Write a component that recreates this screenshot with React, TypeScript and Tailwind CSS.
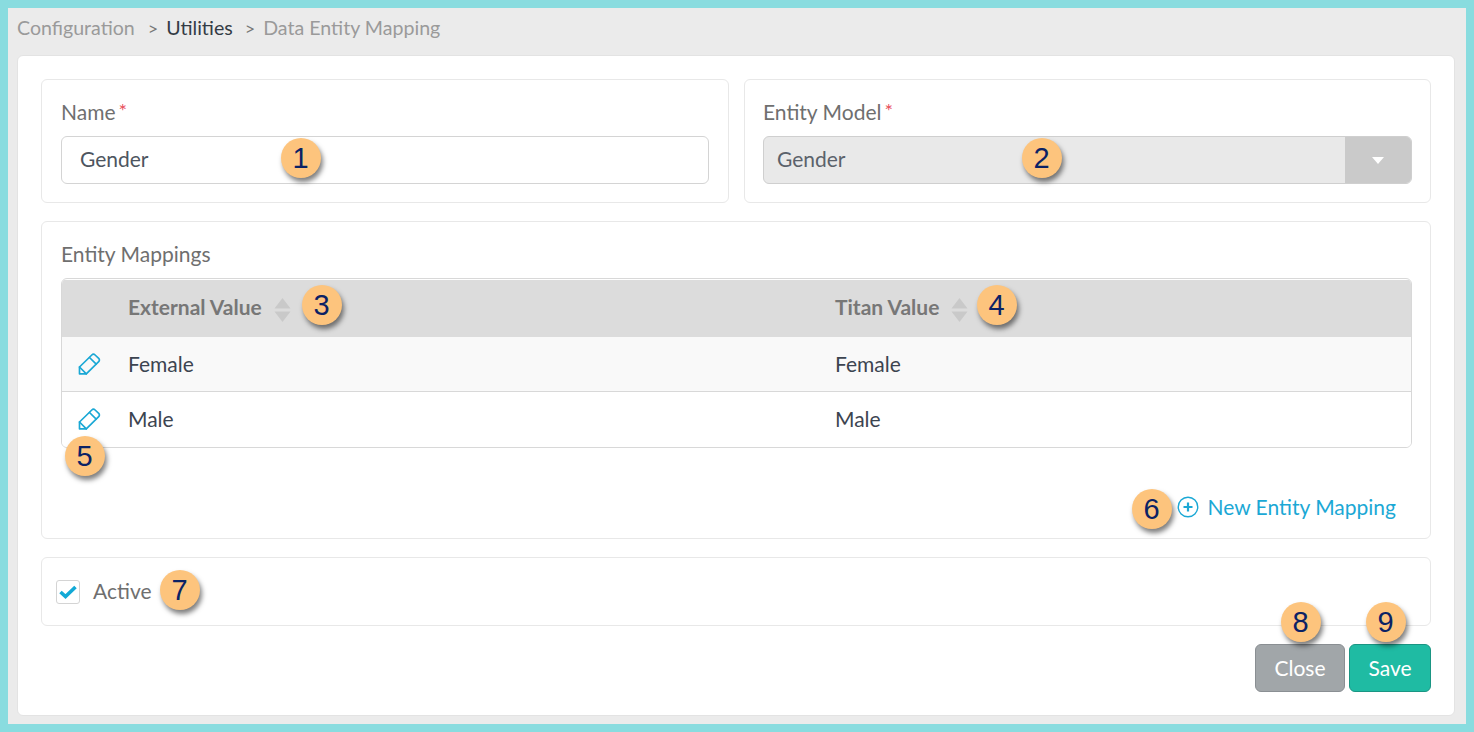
import React from "react";

function Callout({ n, className }: { n: number; className: string }) {
  return (
    <div
      className={`absolute flex h-10 w-10 items-center justify-center rounded-full bg-[#fdc47d] pr-[1px] text-[29px] leading-none text-[#0b2265] shadow-[2px_4px_5px_rgba(0,0,0,0.5)] ${className}`}
      style={{ fontFamily: '"Liberation Sans", Arial, sans-serif' }}
    >
      {n}
    </div>
  );
}

function Pencil() {
  return (
    <svg width="23" height="22" viewBox="0 0 23 22" fill="none" stroke="#1ba8d5" strokeWidth="1.7" strokeLinejoin="round" strokeLinecap="round">
      <path d="M1.5 14 13.8 2a2.4 2.4 0 0 1 3.3 0l3.6 3.4a2.3 2.3 0 0 1 0 3.3L8.3 20.8H1.5z" />
      <path d="M11.5 4.5l6.7 6.6" />
      <path d="M1.5 14l6.8 6.8" />
    </svg>
  );
}

function Sort() {
  return (
    <svg width="17" height="24" viewBox="0 0 17 24" className="ml-[12px] mt-[6px]">
      <path d="M8.5 0 16.5 10.5H.5z" fill="#c9c9c9" />
      <path d="M8.5 24 16.5 13.5H.5z" fill="#c9c9c9" />
    </svg>
  );
}

export default function App() {
  return (
    <div
      className="relative flex h-[732px] w-[1474px] flex-col border-[8px] border-[#89dcdf] bg-[#ebebeb] pl-[9px] pr-[11px] text-[21px] leading-[30px]"
      style={{ fontFamily: 'Lato, "Open Sans", sans-serif' }}
    >
      <div className="flex h-[47px] items-center pb-[8px] text-[19.6px] text-[#9a9a9a]">
        <span>Configuration</span>
        <span className="ml-[13px] text-[18px] text-[#777]">&gt;</span>
        <span className="ml-[8px] text-[#333b45]">Utilities</span>
        <span className="ml-[12px] text-[18px] text-[#777]">&gt;</span>
        <span className="ml-[8px]">Data Entity Mapping</span>
      </div>

      <div className="flex h-[661px] flex-col rounded-[6px] border border-[#e3e3e3] bg-white px-[23px] pt-[23px]">
        <div className="flex gap-[15px]">
          <div className="h-[124px] w-[688px] rounded-[6px] border border-[#e8e8e8] px-[19px] pt-[17px]">
            <div className="h-[39px] text-[#6f6f6f]">
              Name<span className="ml-[3px] align-[2px] text-[20px] leading-none text-[#e8505b]">*</span>
            </div>
            <div className="flex h-[48px] items-center rounded-[6px] border border-[#d4d4d4] pb-[2px] pl-[18px] text-[#4d5560]">Gender</div>
          </div>
          <div className="h-[124px] w-[687px] rounded-[6px] border border-[#e8e8e8] px-[18px] pt-[17px]">
            <div className="h-[39px] text-[#6f6f6f]">
              Entity Model<span className="ml-[3px] align-[2px] text-[20px] leading-none text-[#e8505b]">*</span>
            </div>
            <div className="flex h-[48px] w-[649px] items-center overflow-hidden rounded-[6px] border border-[#cfcfcf] bg-[#e9e9e9] pl-[13px] text-[#5b626b]">
              <span className="flex-1 pb-[2px]">Gender</span>
              <span className="flex h-[48px] w-[66px] items-center justify-center bg-[#cacaca]">
                <span className="h-0 w-0 border-x-[6px] border-t-[7px] border-x-transparent border-t-white" />
              </span>
            </div>
          </div>
        </div>

        <div className="mt-[18px] h-[318px] rounded-[6px] border border-[#e8e8e8] px-[19px] pt-[17px]">
          <div className="h-[39px] text-[#6f6f6f]">Entity Mappings</div>
          <div className="w-[1351px] overflow-hidden rounded-[6px] border border-[#d8d8d8] pt-[1px] text-[#3c4450]">
            <div className="flex h-[57px] items-center bg-[#dcdcdc] pb-[3px] font-bold text-[#777]">
              <div className="flex w-[773px] items-center pl-[66px]">
                External Value
                <Sort />
              </div>
              <div className="flex items-center">
                Titan Value
                <Sort />
              </div>
            </div>
            <div className="flex h-[55px] items-center border-b border-[#d8d8d8] bg-[#f9f9f9]">
              <div className="w-[66px] pl-[16px]"><Pencil /></div>
              <div className="w-[707px] pb-[1px]">Female</div>
              <div className="pb-[1px]">Female</div>
            </div>
            <div className="flex h-[55px] items-center bg-white pb-[1px]">
              <div className="w-[66px] pl-[16px]"><Pencil /></div>
              <div className="w-[707px] pb-[1px]">Male</div>
              <div className="pb-[1px]">Male</div>
            </div>
          </div>
          <div className="mt-[44px] flex items-center justify-end pr-[15px] text-[#1ba8d5]">
            <svg width="22" height="22" viewBox="0 0 22 22" fill="none" stroke="#1ba8d5" className="mr-[8px]">
              <circle cx="11" cy="11" r="9.75" strokeWidth="1.4" />
              <path d="M11 6.5v9M6.5 11h9" strokeWidth="2.2" />
            </svg>
            New Entity Mapping
          </div>
        </div>

        <div className="mt-[18px] flex h-[69px] items-center rounded-[6px] border border-[#e8e8e8] pl-[14px] text-[#6f6f6f]">
          <span className="flex h-[24px] w-[24px] items-center justify-center rounded-[3px] border border-[#d4d4d4]">
            <svg width="18" height="14" viewBox="0 0 18 14" fill="none" stroke="#12a9d6" strokeWidth="3.6">
              <path d="M1.5 7 6.5 11.5 16.5 2" />
            </svg>
          </span>
          <span className="ml-[13px] pb-[1px]">Active</span>
        </div>

        <div className="mt-[18px] flex justify-end gap-[4px]">
          <button className="h-[48px] w-[90px] rounded-[6px] border border-[#8a8f93] bg-[#a1a6a9] text-white">Close</button>
          <button className="h-[48px] w-[82px] rounded-[6px] border border-[#1a9583] bg-[#1fbba3] text-white">Save</button>
        </div>
      </div>

      <Callout n={1} className="left-[273px] top-[130px]" />
      <Callout n={2} className="left-[1014px] top-[130px]" />
      <Callout n={3} className="left-[294px] top-[277px]" />
      <Callout n={4} className="left-[969px] top-[277px]" />
      <Callout n={5} className="left-[57px] top-[428px]" />
      <Callout n={6} className="left-[1124px] top-[481px]" />
      <Callout n={7} className="left-[152px] top-[562px]" />
      <Callout n={8} className="left-[1273px] top-[594px]" />
      <Callout n={9} className="left-[1358px] top-[594px]" />
    </div>
  );
}
